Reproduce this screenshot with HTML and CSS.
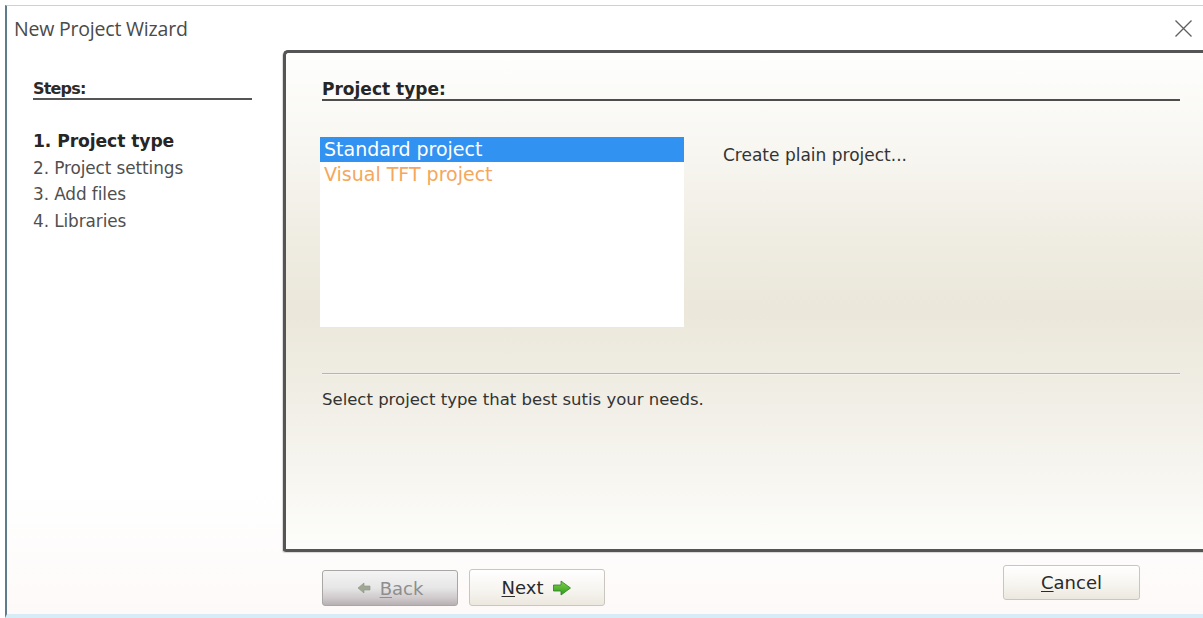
FILE: index.html
```html
<!DOCTYPE html>
<html lang="en">
<head>
<meta charset="utf-8">
<title>New Project Wizard</title>
<link rel="stylesheet" href="styles.css">
</head>
<body>
<div class="window">
  <header class="titlebar">
    <span class="title">New Project Wizard</span>
    <button class="close" aria-label="Close">
      <svg width="19" height="19" viewBox="0 0 19 19"><path d="M1.5 1.5 L17.5 17.5 M17.5 1.5 L1.5 17.5" stroke="#5f5f5f" stroke-width="1.3" fill="none"/></svg>
    </button>
  </header>

  <aside class="steps">
    <div class="steps-head">Steps:</div>
    <ol class="step-list">
      <li class="step current">1. Project type</li>
      <li class="step">2. Project settings</li>
      <li class="step">3. Add files</li>
      <li class="step">4. Libraries</li>
    </ol>
  </aside>

  <main class="page">
    <div class="page-head">Project type:</div>
    <div class="choice">
      <ul class="listbox">
        <li class="item selected">Standard project</li>
        <li class="item tft">Visual TFT project</li>
      </ul>
      <p class="choice-desc">Create plain project...</p>
    </div>
    <div class="separator"></div>
    <p class="hint">Select project type that best sutis your needs.</p>
  </main>

  <footer class="buttons">
    <button class="btn back" disabled>
      <svg width="14" height="12" viewBox="0 0 14 12"><path d="M1 6 L7 1 V4 H13 V8 H7 V11 Z" fill="#9fa894" stroke="#8a937f" stroke-width="0.6"/></svg>
      <span><u>B</u>ack</span>
    </button>
    <button class="btn next">
      <span><u>N</u>ext</span>
      <svg width="20" height="16" viewBox="0 0 20 16"><defs><linearGradient id="grn" x1="0" y1="0" x2="0" y2="1"><stop offset="0" stop-color="#7fd34a"/><stop offset="1" stop-color="#2f9a1e"/></linearGradient></defs><path d="M1.5 5 H9 V1 L18.5 8 L9 15 V11 H1.5 Z" fill="url(#grn)" stroke="#2f7d22" stroke-width="0.8" stroke-linejoin="round"/></svg>
    </button>
    <button class="btn cancel"><span><u>C</u>ancel</span></button>
  </footer>
</div>
</body>
</html>
```

FILE: styles.css
```css
html, body {
  margin: 0;
  padding: 0;
}

body {
  width: 1203px;
  height: 618px;
  overflow: hidden;
  background: #ffffff;
  font-family: "DejaVu Sans", Verdana, sans-serif;
}

.window {
  box-sizing: border-box;
  margin: 5px 0 0 5px;
  height: 613px;
  border-top: 1px solid #b9d7ea;
  border-left: 2px solid #5f7c8b;
  border-bottom: 4px solid #d8ecf7;
  background: linear-gradient(to bottom, #ffffff 0%, #ffffff 80%, #fdf9f8 100%);
  display: grid;
  grid-template-columns: 276px 1fr;
  grid-template-rows: 44px 502px 1fr;
}

/* title bar */
.titlebar {
  grid-column: 1 / 3;
  display: flex;
  align-items: center;
  justify-content: space-between;
  padding: 0 9px 0 7px;
}

.title {
  font-family: "Open Sans", "Noto Sans", sans-serif;
  font-size: 19.5px;
  color: #4a4a4a;
  letter-spacing: -0.2px;
}

.close {
  border: 0;
  background: none;
  padding: 0;
  width: 22px;
  height: 22px;
  display: flex;
  align-items: center;
  justify-content: center;
}

/* steps column */
.steps {
  padding: 29px 0 0 26px;
}

.steps-head {
  width: 219px;
  font-weight: bold;
  font-size: 16px;
  letter-spacing: -0.8px;
  line-height: 19px;
  color: #2b2b2b;
  border-bottom: 2px solid #555555;
}

.step-list {
  list-style: none;
  margin: 28px 0 0;
  padding: 0;
}

.step {
  font-size: 16.9px;
  line-height: 26.7px;
  color: #4f4f4f;
  letter-spacing: -0.1px;
}

.step.current {
  font-weight: bold;
  font-size: 17.2px;
  color: #262626;
}

/* wizard page */
.page {
  box-sizing: border-box;
  margin-right: -30px;
  padding: 26px 53px 0 36px;
  border: 3px solid #555555;
  border-right: 0;
  border-top-left-radius: 5px;
  border-bottom-left-radius: 3px;
  box-shadow: -1px 1px 1px rgba(0, 0, 0, 0.15);
  background: linear-gradient(to bottom, #fefefd 0%, #f8f7f2 18%, #efece2 38%, #ebe7da 52%, #f1efe7 72%, #f8f7f2 88%, #fdfdfb 100%);
}

.page-head {
  font-weight: bold;
  font-size: 17px;
  line-height: 20px;
  color: #262626;
  border-bottom: 2px solid #4d4d4d;
}

.choice {
  display: flex;
  margin-top: 36px;
}

.listbox {
  list-style: none;
  margin: 0 0 0 -2px;
  padding: 0;
  width: 364px;
  height: 190px;
  background: #ffffff;
}

.item {
  height: 25px;
  padding-left: 4px;
  font-size: 19px;
  line-height: 25px;
}

.item.selected {
  background: #3192f2;
  color: #ffffff;
}

.item.tft {
  color: #f5a75c;
}

.choice-desc {
  margin: 8px 0 0 39px;
  font-size: 17px;
  line-height: 20px;
  color: #333333;
}

.separator {
  margin-top: 46px;
  height: 1px;
  border-top: 1px solid #b8b5ab;
  background: #f4f2ec;
}

.hint {
  margin: 15px 0 0;
  font-size: 16.5px;
  line-height: 20px;
  color: #333333;
}

/* dialog buttons */
.buttons {
  grid-column: 2;
  display: flex;
  align-items: flex-start;
  padding: 13px 63px 0 39px;
}

.btn {
  box-sizing: border-box;
  width: 136px;
  height: 36px;
  display: flex;
  align-items: center;
  justify-content: center;
  gap: 9px;
  font-family: "DejaVu Sans", Verdana, sans-serif;
  font-size: 18px;
  color: #2a2a2a;
  border: 1px solid #c9c6c0;
  border-radius: 3px;
  background: linear-gradient(to bottom, #ffffff 0%, #f7f5f0 55%, #ece8df 100%);
  padding: 0;
}

.btn u {
  text-decoration-thickness: 1px;
  text-underline-offset: 2px;
}

.back {
  margin-top: 5px;
  color: #8e8e8e;
  border-color: #a9a7a5;
  background: linear-gradient(to bottom, #f4f4f4 0%, #e6e6e6 50%, #cfc9cb 80%, #b8b1b4 100%);
}

.next {
  margin: 4px 0 0 11px;
  height: 37px;
}

.cancel {
  margin-left: auto;
  width: 137px;
  height: 35px;
}
```
